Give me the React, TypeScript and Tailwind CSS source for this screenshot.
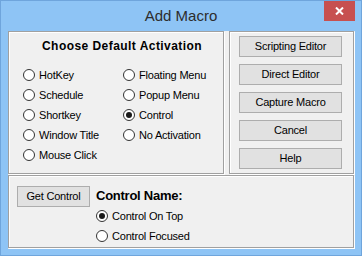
import React from "react";

const font = { fontFamily: '"Liberation Sans", Arial, sans-serif' };

function Radio({ label, checked }: { label: string; checked?: boolean }) {
  return (
    <div className="flex items-center h-[20px]">
      <span className="w-[12px] h-[12px] rounded-full border border-[#333333] bg-white flex items-center justify-center shrink-0">
        {checked && <span className="w-[6px] h-[6px] rounded-full bg-[#1a1a1a]" />}
      </span>
      <span className="ml-[4px] text-[11px] tracking-[-0.2px] text-black whitespace-nowrap">{label}</span>
    </div>
  );
}

function Btn({ label, className }: { label: string; className?: string }) {
  return (
    <div
      className={
        "h-[21px] border border-[#adadad] bg-[#e1e1e1] flex items-center justify-center text-[11px] tracking-[-0.2px] text-black whitespace-nowrap " +
        (className || "")
      }
    >
      {label}
    </div>
  );
}

export default function App() {
  return (
    <div
      className="w-[362px] h-[256px] bg-[#8ec4f5] relative overflow-hidden shadow-[inset_0_0_0_1px_#6fa5dc]"
      style={font}
    >
      <div className="h-[31px] flex items-center justify-center">
        <span className="text-[15px] leading-[31px] text-[#2d2d2d]">Add Macro</span>
        <div className="absolute right-[7px] top-[1px] w-[31px] h-[20px] bg-[#c75050] flex items-center justify-center">
          <svg width="9" height="8" viewBox="0 0 9 8">
            <path d="M1 0.5 L8 7.5 M8 0.5 L1 7.5" stroke="#ffffff" strokeWidth="2" />
          </svg>
        </div>
      </div>
      <div className="ml-[8px] w-[347px] h-[218px] bg-[#f0f0f0]">
        <div className="flex h-[144px]">
          <div className="w-[216px] h-[143px] border border-[#a0a0a0] shadow-[inset_1px_1px_0_#fff,1px_1px_0_#fff]">
            <div className="pt-[6px] pl-[33px] h-[16px] box-content text-[12px] leading-[16px] font-bold tracking-[0.45px] text-black whitespace-nowrap">
              Choose Default Activation
            </div>
            <div className="mt-[11px] pl-[14px] flex">
              <div className="w-[100px] flex flex-col">
                <Radio label="HotKey" />
                <Radio label="Schedule" />
                <Radio label="Shortkey" />
                <Radio label="Window Title" />
                <Radio label="Mouse Click" />
              </div>
              <div className="flex flex-col">
                <Radio label="Floating Menu" />
                <Radio label="Popup Menu" />
                <Radio label="Control" checked />
                <Radio label="No Activation" />
              </div>
            </div>
          </div>
          <div className="ml-[5px] w-[125px] h-[143px] border border-[#a0a0a0] shadow-[inset_1px_1px_0_#fff,1px_1px_0_#fff] pt-[4px] pl-[9px] flex flex-col gap-[7px]">
            <Btn label="Scripting Editor" className="w-[103px]" />
            <Btn label="Direct Editor" className="w-[103px]" />
            <Btn label="Capture Macro" className="w-[103px]" />
            <Btn label="Cancel" className="w-[103px]" />
            <Btn label="Help" className="w-[103px]" />
          </div>
        </div>
        <div className="w-[346px] h-[73px] border border-[#a0a0a0] shadow-[inset_1px_1px_0_#fff,1px_1px_0_#fff] pt-[10px] pl-[8px] flex items-start">
          <Btn label="Get Control" className="w-[73px]" />
          <div className="ml-[6px] flex flex-col">
            <div className="h-[20px] flex items-center text-[13px] font-bold tracking-[-0.25px] text-black whitespace-nowrap">
              Control Name:
            </div>
            <Radio label="Control On Top" checked />
            <Radio label="Control Focused" />
          </div>
        </div>
      </div>
    </div>
  );
}
